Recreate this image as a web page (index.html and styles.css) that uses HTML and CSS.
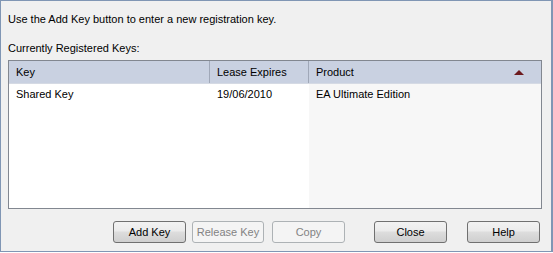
FILE: index.html
```html
<!DOCTYPE html>
<html lang="en">
<head>
    <meta charset="UTF-8">
    <title>Registration Keys</title>
    <link rel="stylesheet" href="styles.css">
</head>
<body>
    <div class="dialog">
        <p class="intro">Use the Add Key button to enter a new registration key.</p>
        <p class="label">Currently Registered Keys:</p>
        <div class="key-list">
            <div class="list-header">
                <div class="col col-key">Key</div>
                <div class="col col-lease">Lease Expires</div>
                <div class="col col-product">Product <span class="sort-arrow"></span></div>
            </div>
            <div class="list-body">
                <div class="list-row">
                    <div class="col col-key">Shared Key</div>
                    <div class="col col-lease">19/06/2010</div>
                    <div class="col col-product">EA Ultimate Edition</div>
                </div>
                <div class="list-fill">
                    <div class="col col-key"></div>
                    <div class="col col-lease"></div>
                    <div class="col col-product"></div>
                </div>
            </div>
        </div>
        <div class="buttons">
            <button class="btn btn-add">Add Key</button>
            <button class="btn btn-release" disabled>Release Key</button>
            <button class="btn btn-copy" disabled>Copy</button>
            <button class="btn btn-close">Close</button>
            <button class="btn btn-help">Help</button>
        </div>
    </div>
</body>
</html>
```

FILE: styles.css
```css
* {
    margin: 0;
    padding: 0;
    box-sizing: border-box;
}

body {
    font-family: 'Liberation Sans', Arial, sans-serif;
    font-size: 11px;
    color: #000;
    background: #fff;
}

.dialog {
    width: 553px;
    height: 252px;
    background: #f0f0f0;
    border: 1px solid #8096b4;
    border-right-width: 2px;
    display: flex;
    flex-direction: column;
    padding: 0 9px 0 7px;
}

.intro {
    margin-top: 12px;
    height: 13px;
    line-height: 13px;
}

.label {
    margin-top: 16px;
    height: 13px;
    line-height: 13px;
}

.key-list {
    margin-top: 5px;
    height: 149px;
    border: 1px solid #828790;
    background: #fff;
    display: flex;
    flex-direction: column;
}

.list-header {
    display: flex;
    height: 23px;
    background: #c9d1e1;
    border-bottom: 1px solid #d5dae4;
}

.list-header .col {
    line-height: 23px;
    border-right: 1px solid #a0a8b8;
    padding-left: 7px;
    position: relative;
}

.list-header .col-product {
    border-right: none;
}

.col-key {
    width: 201px;
}

.col-lease {
    width: 99px;
}

.col-product {
    flex: 1;
}

.list-body {
    flex: 1;
    display: flex;
    flex-direction: column;
}

.list-row {
    display: flex;
    height: 20px;
}

.list-row .col {
    line-height: 20px;
    padding-left: 7px;
}

.list-fill {
    flex: 1;
    display: flex;
}

.list-body .col-product {
    background: #f7f7f7;
}

.sort-arrow {
    position: absolute;
    right: 17px;
    top: 9px;
    width: 0;
    height: 0;
    border-left: 5px solid transparent;
    border-right: 5px solid transparent;
    border-bottom: 5px solid #6d1a1e;
}

.buttons {
    display: flex;
    margin-top: 12px;
    padding-left: 105px;
}

.btn {
    font-family: inherit;
    font-size: 11px;
    width: 73px;
    height: 22px;
    padding: 0;
    border: 1px solid #707070;
    border-radius: 3px;
    color: #000;
    background: linear-gradient(#f2f2f2 0%, #ebebeb 45%, #dddddd 50%, #cfcfcf 100%);
}

.btn:disabled {
    border-color: #adb2b5;
    background: #f4f4f4;
    color: #838383;
}

.btn-release {
    width: 72px;
    margin-left: 6px;
}

.btn-copy {
    margin-left: 8px;
}

.btn-close {
    margin-left: 29px;
}

.btn-help {
    margin-left: 20px;
}
```
